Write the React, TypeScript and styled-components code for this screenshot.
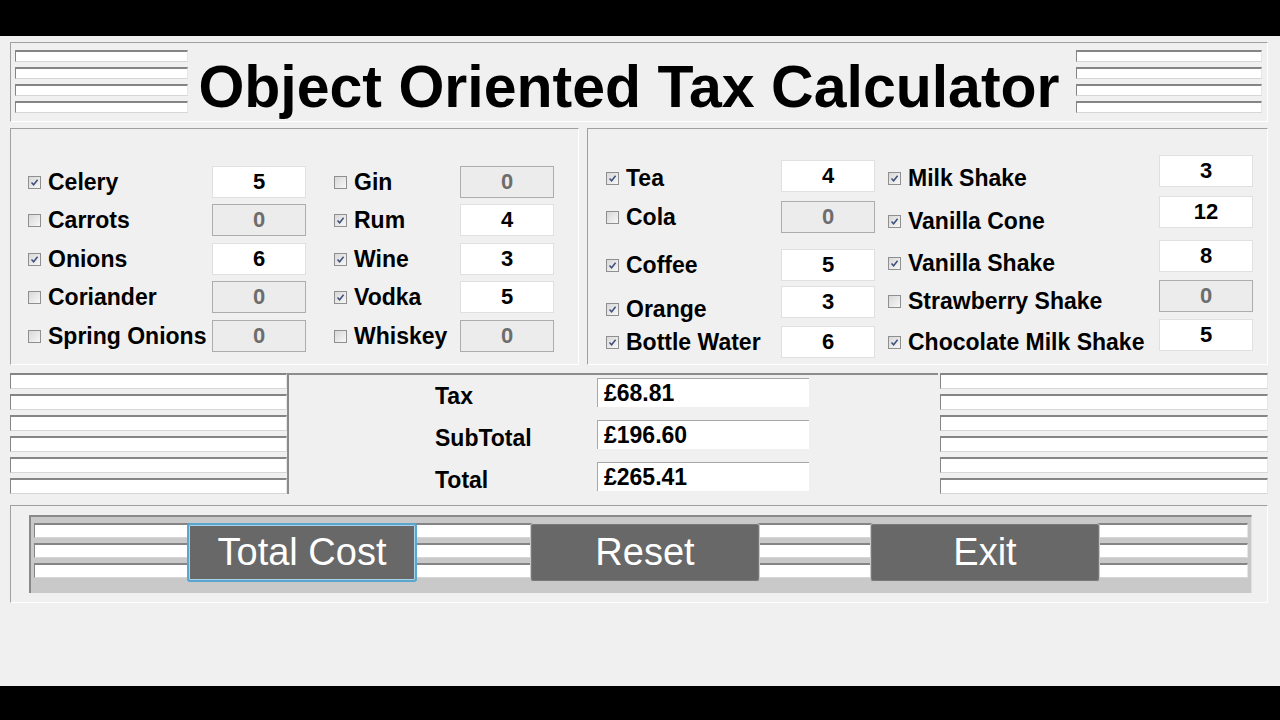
import { Fragment } from 'react'
import styled, { createGlobalStyle } from 'styled-components'

const GlobalStyle = createGlobalStyle`
  html, body { margin: 0; padding: 0; background: #000; }
  body { font-family: "Liberation Sans", Arial, sans-serif; }
  * { box-sizing: border-box; }
`

interface Item {
  name: string
  qty: number
  on: boolean
  mt: number
  drop?: number
}

const food: Item[] = [
  { name: 'Celery', qty: 5, on: true, mt: 37 },
  { name: 'Carrots', qty: 0, on: false, mt: 6 },
  { name: 'Onions', qty: 6, on: true, mt: 7 },
  { name: 'Coriander', qty: 0, on: false, mt: 6 },
  { name: 'Spring Onions', qty: 0, on: false, mt: 7 },
]

const spirits: Item[] = [
  { name: 'Gin', qty: 0, on: false, mt: 37 },
  { name: 'Rum', qty: 4, on: true, mt: 6 },
  { name: 'Wine', qty: 3, on: true, mt: 7 },
  { name: 'Vodka', qty: 5, on: true, mt: 6 },
  { name: 'Whiskey', qty: 0, on: false, mt: 7 },
]

const drinks: Item[] = [
  { name: 'Tea', qty: 4, on: true, mt: 31, drop: 2 },
  { name: 'Cola', qty: 0, on: false, mt: 9 },
  { name: 'Coffee', qty: 5, on: true, mt: 16 },
  { name: 'Orange', qty: 3, on: true, mt: 5, drop: 5 },
  { name: 'Bottle Water', qty: 6, on: true, mt: 8 },
]

const shakes: Item[] = [
  { name: 'Milk Shake', qty: 3, on: true, mt: 26, drop: 5 },
  { name: 'Vanilla Cone', qty: 12, on: true, mt: 9, drop: 6 },
  { name: 'Vanilla Shake', qty: 8, on: true, mt: 12, drop: 5 },
  { name: 'Strawberry Shake', qty: 0, on: false, mt: 8, drop: 4 },
  { name: 'Chocolate Milk Shake', qty: 5, on: true, mt: 7, drop: 5 },
]

const totals = [
  { label: 'Tax', value: '£68.81' },
  { label: 'SubTotal', value: '£196.60' },
  { label: 'Total', value: '£265.41' },
]

const Screen = styled.div`
  width: 1280px;
  height: 720px;
  background: #000;
  padding: 36px 0 34px;
  display: flex;
  flex-direction: column;
`

const Window = styled.div`
  flex: 1;
  background: #f0f0f0;
  padding: 6px 12px 0 10px;
  display: flex;
  flex-direction: column;
`

const Sunken = styled.div`
  border-top: 1px solid #a0a0a0;
  border-left: 1px solid #a0a0a0;
  border-bottom: 1px solid #fff;
  border-right: 1px solid #fff;
`

const Header = styled(Sunken)`
  height: 80px;
  display: flex;
  align-items: flex-start;
  padding: 7px 5px 0 4px;
`

const Title = styled.h1`
  flex: 1;
  margin: 0;
  align-self: center;
  text-align: center;
  font-size: 59px;
  font-weight: 700;
  line-height: 1;
  color: #000;
  padding: 3px 6px 0 0;
`

const Stack = styled.div<{ $w: number; $h: number; $gap: number }>`
  width: ${(p) => p.$w}px;
  flex: 0 0 ${(p) => p.$w}px;
  display: flex;
  flex-direction: column;
  gap: ${(p) => p.$gap}px;

  & > div {
    height: ${(p) => p.$h}px;
  }
`

const Slot = styled.div`
  background: #fff;
  border-top: 2px solid #858585;
  border-left: 1px solid #858585;
  border-bottom: 1px solid #d6d6d6;
  border-right: 1px solid #e6e6e6;
`

const Boxes = ({ n, w, h, gap }: { n: number; w: number; h: number; gap: number }) => (
  <Stack $w={w} $h={h} $gap={gap}>
    {Array.from({ length: n }, (_, i) => (
      <Slot key={i} />
    ))}
  </Stack>
)

const Panels = styled.div`
  margin-top: 6px;
  display: flex;
  gap: 8px;
`

const Panel = styled(Sunken)<{ $w: number; $pad: number; $gap: number }>`
  width: ${(p) => p.$w}px;
  height: 237px;
  display: flex;
  padding-left: ${(p) => p.$pad}px;
  gap: ${(p) => p.$gap}px;
`

const Column = styled.div`
  display: flex;
  flex-direction: column;
`

const Row = styled.div<{ $labelW: number; $mt: number }>`
  display: grid;
  grid-template-columns: ${(p) => p.$labelW}px 94px;
  height: 32px;
  margin-top: ${(p) => p.$mt}px;
`

const ItemLabel = styled.label<{ $drop: number }>`
  display: flex;
  align-items: center;
  gap: 7px;
  padding-top: ${(p) => p.$drop * 2}px;
  font-size: 23px;
  font-weight: 700;
  color: #000;
  white-space: nowrap;
`

const Check = styled.span`
  width: 13px;
  height: 13px;
  flex: 0 0 13px;
  border: 1px solid #8f8f8f;
  background: linear-gradient(135deg, #d8d8d8, #f7f7f7);
  display: inline-flex;
  align-items: center;
  justify-content: center;
`

const Qty = styled.div<{ $off: boolean }>`
  height: 32px;
  display: flex;
  align-items: center;
  justify-content: center;
  font-size: 22px;
  font-weight: 700;
  background: ${(p) => (p.$off ? '#ececec' : '#fff')};
  border: 1px solid ${(p) => (p.$off ? '#adadad' : '#e0e0e0')};
  color: ${(p) => (p.$off ? '#6d6d6d' : '#000')};
`

const Tick = () => (
  <svg width="9" height="9" viewBox="0 0 9 9">
    <path d="M1.5 4.5 L3.6 6.8 L7.6 1.8" fill="none" stroke="#3d4f7a" strokeWidth="1.5" />
  </svg>
)

const ItemList = ({ items, labelW }: { items: Item[]; labelW: number }) => (
  <Column>
    {items.map((it) => (
      <Row key={it.name} $labelW={labelW} $mt={it.mt}>
        <ItemLabel $drop={it.drop ?? 0}>
          <Check>{it.on && <Tick />}</Check>
          {it.name}
        </ItemLabel>
        <Qty $off={!it.on}>{it.qty}</Qty>
      </Row>
    ))}
  </Column>
)

const TotalsBar = styled.div`
  margin-top: 8px;
  height: 121px;
  display: flex;
`

const Summary = styled.div`
  flex: 0 0 651px;
  border-top: 2px solid #8c8c8c;
  border-left: 2px solid #8c8c8c;
  display: grid;
  grid-template-columns: 162px 212px;
  grid-template-rows: repeat(3, 29px);
  row-gap: 13px;
  padding: 3px 0 0 146px;
  margin-right: 2px;
`

const SumLabel = styled.div`
  align-self: center;
  padding-top: 7px;
  font-size: 23px;
  font-weight: 700;
`

const Money = styled.div`
  background: #fff;
  border-top: 1px solid #a8a8a8;
  border-left: 1px solid #a8a8a8;
  padding: 0 6px;
  display: flex;
  align-items: center;
  font-size: 23px;
  font-weight: 700;
`

const ButtonGroup = styled(Sunken)`
  margin-top: 11px;
  height: 98px;
  padding: 9px 15px 9px 18px;
`

const Tray = styled.div`
  height: 78px;
  background: #c9c9c9;
  border-top: 2px solid #8a8a8a;
  border-left: 2px solid #8a8a8a;
  border-right: 1px solid #e0e0e0;
  display: grid;
  grid-template-areas: 'layer';
  align-items: start;
  padding: 6px 3px 0 3px;

  & > * {
    grid-area: layer;
  }
`

const TrayStack = styled.div`
  display: flex;
  flex-direction: column;
  gap: 5px;

  & > div {
    height: 15px;
  }
`

const ButtonRow = styled.div`
  display: flex;
  padding-left: 153px;
`

const Button = styled.button<{ $focus?: boolean; $ml: number }>`
  width: 230px;
  height: 59px;
  margin-left: ${(p) => p.$ml}px;
  background: #686868;
  color: #fff;
  font-family: "Liberation Sans", Arial, sans-serif;
  font-size: 38px;
  border-radius: 3px;
  border: ${(p) => (p.$focus ? '2px solid #5aa6cf' : '1px solid #c8c8c8')};
  box-shadow: ${(p) => (p.$focus ? 'inset 0 0 0 1px #a9d3ea' : 'inset 0 0 0 1px #7a7a7a')};
  padding: 0;
  cursor: pointer;
`

export default function App() {
  return (
    <Screen>
      <GlobalStyle />
      <Window>
        <Header>
          <Boxes n={4} w={173} h={12} gap={5} />
          <Title>Object Oriented Tax Calculator</Title>
          <Boxes n={4} w={186} h={12} gap={5} />
        </Header>

        <Panels>
          <Panel $w={569} $pad={17} $gap={28}>
            <ItemList items={food} labelW={184} />
            <ItemList items={spirits} labelW={126} />
          </Panel>
          <Panel $w={681} $pad={18} $gap={13}>
            <ItemList items={drinks} labelW={175} />
            <ItemList items={shakes} labelW={271} />
          </Panel>
        </Panels>

        <TotalsBar>
          <Boxes n={6} w={277} h={16} gap={5} />
          <Summary>
            {totals.map((t) => (
              <Fragment key={t.label}>
                <SumLabel>{t.label}</SumLabel>
                <Money>{t.value}</Money>
              </Fragment>
            ))}
          </Summary>
          <Boxes n={6} w={328} h={16} gap={5} />
        </TotalsBar>

        <ButtonGroup>
          <Tray>
            <TrayStack>
              <Slot />
              <Slot />
              <Slot />
            </TrayStack>
            <ButtonRow>
              <Button $focus $ml={0}>Total Cost</Button>
              <Button $ml={113}>Reset</Button>
              <Button $ml={110}>Exit</Button>
            </ButtonRow>
          </Tray>
        </ButtonGroup>
      </Window>
    </Screen>
  )
}
